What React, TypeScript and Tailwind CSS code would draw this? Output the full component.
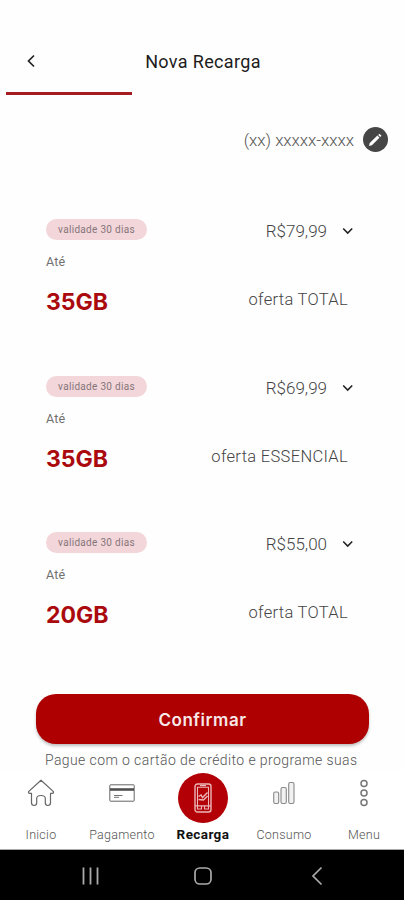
import { ReactNode } from 'react';

const offers = [
  { id: 1, data: '35GB', price: 'R$79,99', name: 'oferta TOTAL', height: 'h-[157px]' },
  { id: 2, data: '35GB', price: 'R$69,99', name: 'oferta ESSENCIAL', height: 'h-[156px]' },
  { id: 3, data: '20GB', price: 'R$55,00', name: 'oferta TOTAL', height: 'h-[162px]' },
];

function OfferCard({ data, price, name, height }: { data: string; price: string; name: string; height: string }) {
  return (
    <div className={`flex justify-between pl-[46px] pr-14 ${height}`}>
      <div className="flex flex-col items-start">
        <span className="flex h-[21px] w-[101px] items-center justify-center rounded-full bg-[#f3d6da] text-[10px] leading-none tracking-[0.3px] text-[#857579]">
          validade 30 dias
        </span>
        <span className="mt-[14px] text-[12.5px] leading-4 tracking-[0.2px] text-[#707070]">Até</span>
        <span className="mt-[16px] font-[Inter] text-[23px] font-bold leading-8 text-[#aa0a0e]">{data}</span>
      </div>
      <div className="flex flex-col items-end">
        <div className="flex items-center">
          <span className="pt-px text-[17px] font-light leading-[22px] text-[#444]">{price}</span>
          <svg className="ml-[15px] mr-[-6px]" width="12" height="8" viewBox="0 0 12 8" fill="none" stroke="#222" strokeWidth="1.6">
            <path d="M1.200 1.500 5.700 6l4.500-4.500" />
          </svg>
        </div>
        <span className="mt-[47px] text-[16.5px] font-light leading-[22px] tracking-[0.32px] text-[#444]">{name}</span>
      </div>
    </div>
  );
}

function NavItem({ label, width, children }: { label: string; width: string; children: ReactNode }) {
  return (
    <div className={`flex flex-col items-center ${width}`}>
      <div className="flex h-[46px] items-center">{children}</div>
      <span className="mt-[11px] text-[12.5px] font-light leading-4 tracking-[0.25px] text-[#555]">{label}</span>
    </div>
  );
}

export default function App() {
  return (
    <div className="flex h-[900px] w-[404px] flex-col overflow-hidden bg-[#fefefe] font-[Roboto,sans-serif]">
      {/* Header */}
      <header className="grid h-[92px] grid-cols-[60px_1fr_60px] pt-[50px]">
        <svg className="ml-[26px] mt-1" width="10" height="14" viewBox="0 0 10 14" fill="none" stroke="#222" strokeWidth="1.7">
          <path d="M8 1.500 2.500 7 8 12.500" />
        </svg>
        <h1 className="pl-[2px] text-center text-[18px] leading-6 tracking-[0.35px] text-[#1c1c1c]">Nova Recarga</h1>
      </header>
      <div className="ml-1.5 h-[3px] w-[126px] bg-[#a51d22]" />

      {/* Phone number */}
      <div className="mt-8 flex h-[25px] items-center justify-end pr-4">
        <span className="mr-[9px] pt-[2px] text-[17px] font-light tracking-[-0.050px] text-[#555]">(xx) xxxxx-xxxx</span>
        <span className="flex h-[25px] w-[25px] items-center justify-center rounded-full bg-[#464646]">
          <svg width="15" height="15" viewBox="0 0 15 15" fill="#fff">
            <path d="m1 14 .7-2.900 7.700-7.500 2.100 2.100-7.600 7.600zM10.200 2.900l1.200-1.200 2.100 2.100-1.200 1.200z" />
          </svg>
        </span>
      </div>

      {/* Offers */}
      <main className="mt-[67px]">
        {offers.map((offer) => (
          <OfferCard key={offer.id} data={offer.data} price={offer.price} name={offer.name} height={offer.height} />
        ))}
      </main>

      <button className="ml-9 h-[50px] w-[333px] shrink-0 rounded-[20px] bg-[#ae0000] pt-[3px] font-[Inter] text-[17px] font-semibold tracking-[0.55px] text-[#f8e8e8] shadow-[0_2px_3px_rgba(0,0,0,0.25)]">
        Confirmar
      </button>
      <p className="ml-[45px] mt-[6px] h-[20px] shrink-0 whitespace-nowrap text-[14px] font-light leading-5 tracking-[0.4px] text-[#555]">
        Pague com o cartão de crédito e programe suas
      </p>

      {/* Bottom menu */}
      <nav className="flex h-[80px] shrink-0 border-b border-[#aaa] bg-white">
        <NavItem label="Inicio" width="w-[82px]">
          <svg width="28" height="28" viewBox="0 0 28 28" fill="none" stroke="#666" strokeWidth="1.2" strokeLinejoin="round">
            <path d="M14 1.200 1.800 12.400q-.8 1.300.5 1.900h2.200v9.500q0 2.700 2.600 2.700t2.600-2.700v-4.300q0-3 4.300-3t4.300 3v4.300q0 2.700 2.600 2.700t2.600-2.700v-9.500h2.200q1.300-.6.500-1.900z" />
          </svg>
        </NavItem>
        <NavItem label="Pagamento" width="w-[80px]">
          <svg width="26" height="18" viewBox="0 0 26 18" fill="none" stroke="#666">
            <rect x=".8" y=".8" width="24.400" height="16.400" rx=".6" />
            <path d="M1 5.500h24" stroke="#505050" strokeWidth="2.600" />
            <path d="M5 11.500h8.500M5 13.300h5" strokeWidth=".9" />
          </svg>
        </NavItem>
        <div className="flex w-[82px] flex-col items-center pt-[3px]">
          <span className="flex h-[50px] w-[50px] items-center justify-center rounded-full bg-[#b20006]">
            <svg width="18" height="30" viewBox="0 0 18 30" fill="none" stroke="#edb6b8" strokeWidth="1.100">
              <rect x="1" y="1" width="16" height="28" rx="2.500" strokeWidth="1.400" />
              <path d="M3.500 22.800V4.300h11v18.500" />
              <path d="M6 2.700h6M1 22.800h16" strokeWidth="1.300" />
              <path d="M3.500 22.800v3.200h4v-3M14.500 22.800v3.200h-4v-3" />
              <path d="m4.500 13.500 2.500-1.500 1.500 2.500 5-5M4.500 16.500l5 .5 4-4" strokeWidth="1.400" />
            </svg>
          </span>
          <span className="mt-[3px] text-[13.5px] font-bold leading-4 tracking-[0.4px] text-[#111]">Recarga</span>
        </div>
        <NavItem label="Consumo" width="w-[80px]">
          <svg width="22" height="24" viewBox="0 0 22 24" fill="#f1f1f1" stroke="#888" strokeWidth="1.100">
            <rect x=".7" y="11" width="5" height="11.500" rx="1.500" />
            <rect x="8" y="6.500" width="5.300" height="16" rx="1.500" />
            <rect x="15.700" y="1.500" width="5.300" height="21" rx="1.500" />
          </svg>
        </NavItem>
        <NavItem label="Menu" width="w-[80px]">
          <svg width="10" height="28" viewBox="0 0 10 28" fill="none" stroke="#777" strokeWidth="1.500">
            <circle cx="5" cy="4.500" r="3" />
            <circle cx="5" cy="14" r="3" />
            <circle cx="5" cy="23.500" r="3" />
          </svg>
        </NavItem>
      </nav>

      {/* System navigation */}
      <div className="flex h-[50px] shrink-0 items-center bg-black pl-[81px] pt-px">
        <svg width="19" height="20" viewBox="0 0 19 20" stroke="#aaa" strokeWidth="1.800">
          <path d="M2.500 1.500v17M9.500 1.500v17M16.500 1.500v17" />
        </svg>
        <svg className="ml-[93px]" width="20" height="20" viewBox="0 0 20 20" fill="none" stroke="#aaa" strokeWidth="1.700">
          <rect x="2" y="2" width="16" height="16" rx="4.800" />
        </svg>
        <svg className="ml-[97px]" width="14" height="20" viewBox="0 0 14 20" fill="none" stroke="#aaa" strokeWidth="1.700">
          <path d="M11.500 1.500 3 10l8.500 8.500" />
        </svg>
      </div>
    </div>
  );
}
